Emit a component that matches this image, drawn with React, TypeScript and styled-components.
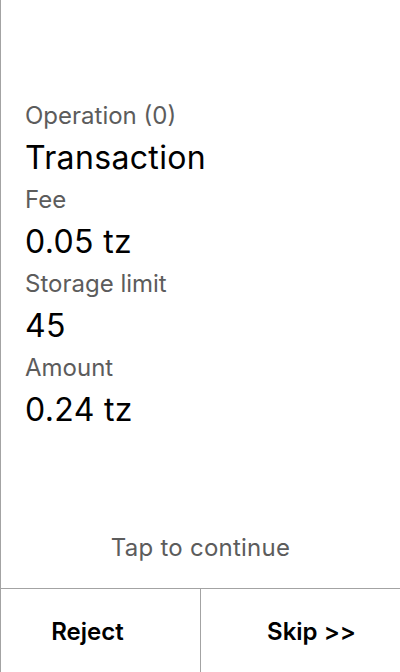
import React from "react";
import styled, { createGlobalStyle } from "styled-components";

const Global = createGlobalStyle`
  html, body { margin: 0; padding: 0; background: #fff; }
  body { font-family: Inter, "Noto Sans", sans-serif; }
`;

const Screen = styled.div`
  box-sizing: border-box;
  width: 400px;
  height: 672px;
  display: flex;
  flex-direction: column;
  border-left: 1px solid #a3a3a3;
  background: #fff;
`;

const Content = styled.div`
  flex: 1;
  display: flex;
  flex-direction: column;
  padding: 95px 0 0 24px;
`;

const Label = styled.div`
  font-size: 24px;
  line-height: 42px;
  height: 42px;
  color: #5c5c5c;
`;

const Value = styled.div`
  font-size: 32px;
  line-height: 42px;
  height: 42px;
  letter-spacing: 0.35px;
  color: #000;
`;

const Hint = styled.div`
  text-align: center;
  font-size: 24px;
  line-height: 40px;
  letter-spacing: 0.25px;
  color: #5c5c5c;
  padding-bottom: 20px;
`;

const ButtonRow = styled.div`
  display: grid;
  grid-template-columns: 199px 1fr;
  height: 84px;
  border-top: 1px solid #a3a3a3;
  box-sizing: border-box;
`;

const Button = styled.button<{ $side: "left" | "right" }>`
  border: none;
  border-left: ${(p) => (p.$side === "right" ? "1px solid #a3a3a3" : "none")};
  background: transparent;
  font-family: Inter, "Noto Sans", sans-serif;
  font-size: 24px;
  font-weight: 600;
  color: #000;
  display: flex;
  align-items: center;
  justify-content: center;
  padding: ${(p) => (p.$side === "left" ? "2px 26px 0 0" : "2px 0 0 22px")};
  cursor: pointer;
`;

const rows = [
  { label: "Operation (0)", value: "Transaction" },
  { label: "Fee", value: "0.05 tz" },
  { label: "Storage limit", value: "45" },
  { label: "Amount", value: "0.24 tz" },
];

export default function App() {
  return (
    <>
      <Global />
      <Screen>
        <Content>
          {rows.map((r) => (
            <React.Fragment key={r.label}>
              <Label>{r.label}</Label>
              <Value>{r.value}</Value>
            </React.Fragment>
          ))}
        </Content>
        <Hint>Tap to continue</Hint>
        <ButtonRow>
          <Button $side="left">Reject</Button>
          <Button $side="right">Skip &gt;&gt;</Button>
        </ButtonRow>
      </Screen>
    </>
  );
}
